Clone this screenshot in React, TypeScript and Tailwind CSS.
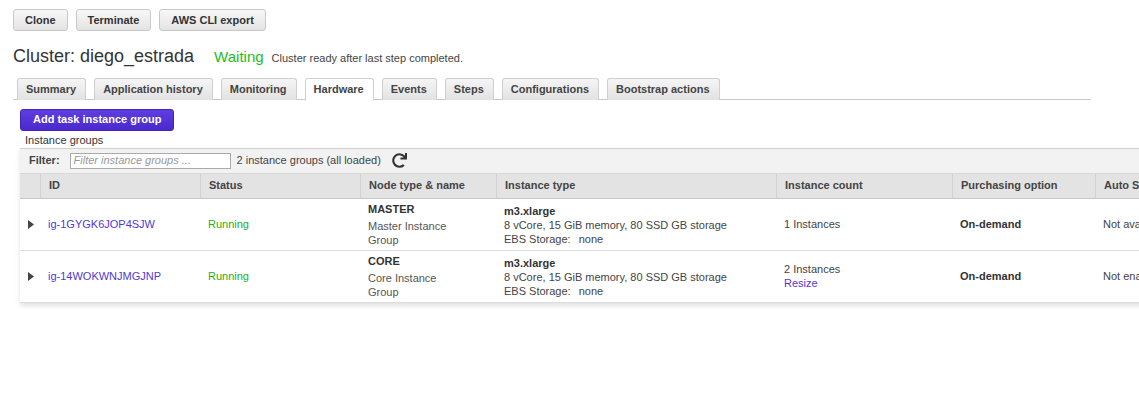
import React from "react";
import { FaRedo } from "react-icons/fa";

const tabs = [
  "Summary",
  "Application history",
  "Monitoring",
  "Hardware",
  "Events",
  "Steps",
  "Configurations",
  "Bootstrap actions",
];

const cols = "grid grid-cols-[20px_160px_160px_136px_280px_176px_143px_200px]";

function Btn({ children }: { children: React.ReactNode }) {
  return (
    <button className="h-[22px] px-[11px] rounded-[3px] border border-[#c8c8c8] bg-gradient-to-b from-[#f7f7f7] to-[#e4e4e4] text-[11px] font-bold text-[#333] leading-none">
      {children}
    </button>
  );
}

function Tri() {
  return (
    <svg width="6" height="9" viewBox="0 0 6 9">
      <path d="M0 0 L6 4.5 L0 9 Z" fill="#444" />
    </svg>
  );
}

function Row({
  id,
  node,
  nodeName,
  count,
  resize,
  auto,
}: {
  id: string;
  node: string;
  nodeName: string[];
  count: string;
  resize?: boolean;
  auto: string;
}) {
  return (
    <div className={`${cols} h-[52px] items-center border-b border-[#dcdcdc] text-[11px] text-[#444]`}>
      <div className="flex justify-center pl-[2px]">
        <Tri />
      </div>
      <div className="pl-[8px] text-[#5138d6]">{id}</div>
      <div className="pl-[8px] text-[#22b022]">Running</div>
      <div className="pl-[8px] leading-[14px]">
        <div className="font-bold text-[#333] mb-[3px]">{node}</div>
        {nodeName.map((n) => (
          <div key={n} className="text-[#555]">
            {n}
          </div>
        ))}
      </div>
      <div className="pl-[8px] leading-[14px] pt-[2px]">
        <div className="font-bold text-[#333]">m3.xlarge</div>
        <div>8 vCore, 15 GiB memory, 80 SSD GB storage</div>
        <div>
          EBS Storage:<span className="ml-[8px]">none</span>
        </div>
      </div>
      <div className="pl-[8px] leading-[14px]">
        <div>{count}</div>
        {resize && <div className="text-[#5138d6]">Resize</div>}
      </div>
      <div className="pl-[8px] font-bold text-[#333]">On-demand</div>
      <div className="pl-[8px] whitespace-nowrap">{auto}</div>
    </div>
  );
}

export default function App() {
  return (
    <div
      className="w-[1139px] h-[400px] overflow-hidden bg-white text-[#333]"
      style={{ fontFamily: '"Liberation Sans", Arial, sans-serif' }}
    >
      <div className="flex gap-[8px] pl-[13px] pt-[9px]">
        <Btn>Clone</Btn>
        <Btn>Terminate</Btn>
        <Btn>AWS CLI export</Btn>
      </div>

      <div className="flex items-baseline pl-[13px] mt-[12px]">
        <span className="text-[18px] text-[#333]">Cluster: diego_estrada</span>
        <span className="ml-[20px] text-[15px] text-[#1dbd1d]">Waiting</span>
        <span className="ml-[8px] text-[11px] text-[#444]">Cluster ready after last step completed.</span>
      </div>

      <div className="ml-[13px] w-[1078px] mt-[8px] border-b border-[#c8c8c8] flex gap-[8px] pl-[4px] h-[22px]">
        {tabs.map((t) => {
          const active = t === "Hardware";
          return (
            <div
              key={t}
              className={
                "h-[22px] pl-[8px] pr-[9px] flex items-center rounded-t-[3px] border border-[#cfcfcf] text-[11px] font-bold text-[#444] " +
                (active
                  ? "bg-white border-b-white h-[23px]"
                  : "bg-gradient-to-b from-[#f5f5f5] to-[#e2e2e2] border-b-0")
              }
            >
              {t}
            </div>
          );
        })}
      </div>

      <div className="pl-[20px] mt-[6px]">
        <button className="h-[22px] px-[12px] rounded-[3px] bg-gradient-to-b from-[#5e3ee0] to-[#4a29cc] border border-[#4223bd] text-white text-[11px] font-bold leading-none">
          Add task instance group
        </button>
      </div>
      <div className="pl-[25px] text-[11px] text-[#333] leading-[14px] mt-[2px]">Instance groups</div>

      <div className="ml-[20px] w-[1200px] mt-[1px] shadow-[0_3px_5px_rgba(0,0,0,0.12)]">
        <div className="h-[26px] bg-[#f2f2f2] border-t border-[#d0d0d0] border-b border-b-[#d8d8d8] flex items-center text-[11px]">
          <span className="ml-[9px] font-bold text-[#444]">Filter:</span>
          <div className="ml-[10px] w-[161px] h-[16px] border border-[#aaa] bg-white flex items-center pl-[3px] italic text-[#999]">
            Filter instance groups ...
          </div>
          <span className="ml-[6px] text-[#444]">2 instance groups (all loaded)</span>
          <FaRedo className="ml-[11px] text-[#333]" size={15} />
        </div>
        <div className={`${cols} h-[25px] bg-[#e3e3e3] border-b border-[#c8c8c8] text-[11px] font-bold text-[#444]`}>
          {["", "ID", "Status", "Node type & name", "Instance type", "Instance count", "Purchasing option", "Auto Scaling policy"].map(
            (h, i) => (
              <div
                key={i}
                className={"flex items-center pl-[8px] whitespace-nowrap " + (i > 0 ? "border-l border-[#d2d2d2]" : "")}
              >
                {h}
              </div>
            )
          )}
        </div>
        <Row
          id="ig-1GYGK6JOP4SJW"
          node="MASTER"
          nodeName={["Master Instance", "Group"]}
          count="1 Instances"
          auto="Not available"
        />
        <Row
          id="ig-14WOKWNJMGJNP"
          node="CORE"
          nodeName={["Core Instance", "Group"]}
          count="2 Instances"
          resize
          auto="Not enabled"
        />
      </div>
    </div>
  );
}
